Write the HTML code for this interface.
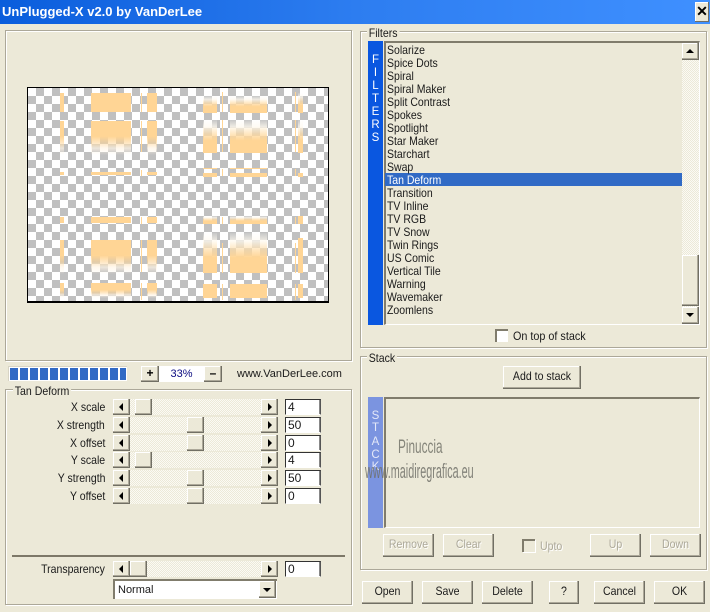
<!DOCTYPE html>
<html><head><meta charset="utf-8"><style>
html,body{margin:0;padding:0}
body{width:710px;height:612px;overflow:hidden;position:relative;background:#ece9d8;font:12px/14px "Liberation Sans",sans-serif;color:#1a1a1a}
div,span{position:absolute;box-sizing:border-box;white-space:nowrap}
.title{left:0;top:0;width:710px;height:24px;background:linear-gradient(90deg,#0a5ddc,#2d7df0 50%,#3f90ff)}
.grp{border:1px solid #aca899;box-shadow:1px 1px 0 #fff,inset 1px 1px 0 #fff}
.lab{background:#ece9d8;padding:0 2px;height:14px;transform:scaleX(.88);transform-origin:0 0}
.btn{background:#ece9d8;box-shadow:inset -1px -1px 0 #716f64,inset -2px -2px 0 #aca899,inset 1px 1px 0 #fff;text-align:center;line-height:21px}
.btn span{position:static;display:block;transform:scaleX(.88)}
.dis{color:#aca899;text-shadow:1px 1px 0 #fff}
.trk{height:16px;width:165px;left:113px;background:#f6f4ea;background-image:repeating-conic-gradient(#ece9d8 0 25%,#fbfaf4 0 50%);background-size:2px 2px}
.sb{width:17px;height:16px;background:#ece9d8;box-shadow:inset -1px -1px 0 #716f64,inset -2px -2px 0 #aca899,inset 1px 1px 0 #fff}
.th{width:17px;height:16px;background:#ece9d8;box-shadow:inset -1px -1px 0 #716f64,inset -2px -2px 0 #aca899,inset 1px 1px 0 #fff}
.al{width:0;height:0;border:4px solid transparent;border-left:0;border-right:4px solid #000;left:6px;top:4px}
.ar{width:0;height:0;border:4px solid transparent;border-right:0;border-left:4px solid #000;left:7px;top:4px}
.au{width:0;height:0;border:4px solid transparent;border-top:0;border-bottom:4px solid #000;left:4px;top:6px}
.ad{width:0;height:0;border:4px solid transparent;border-bottom:0;border-top:4px solid #000;left:4px;top:6px}
.rl{right:605px;text-align:right;transform:scaleX(.875);transform-origin:100% 0}
.inp{left:285px;width:36px;height:16px;background:#fff;border-left:1px solid #333;border-top:1px solid #333;border-right:1px solid #555;border-bottom:1px solid #fff;box-shadow:inset -1px 0 0 #888;padding-left:2px;line-height:14px;font-size:12px}
.sunk{background:#ece9d8;border-left:2px solid #807c6c;border-top:2px solid #807c6c;border-right:1px solid #fff;border-bottom:1px solid #fff}
.it{left:387px;height:13px;line-height:13px;transform:scaleX(.875);transform-origin:0 0}
.prev{left:27px;top:87px;width:302px;height:216px;border:1px solid #000;border-bottom-width:2px;overflow:hidden;background-color:#fff;background-image:repeating-conic-gradient(#c0c0c0 0 25%,#fff 0 50%);background-size:16px 16px;background-position:0 0}
.o{background:#ffd595}
.l{background:#ffd595;width:1px;left:113px}
.m{background:#ffd595;width:1px;left:194px}
.n{background:#ffd595;width:1px;left:267px}
.f{background:linear-gradient(#ffd595 0,#ffd595 45%,rgba(255,213,149,.55) 65%,rgba(255,245,230,.7) 80%,rgba(255,255,255,0) 100%)}
.u{background:linear-gradient(rgba(255,255,255,.1) 0,rgba(255,250,240,.75) 20%,rgba(255,220,165,.7) 42%,#ffd595 62%,#ffd595 100%)}
.v{color:#fff;width:15px;text-align:center;line-height:13px;font-size:11.5px}
</style></head><body>
<div class="title"></div>
<div style="left:2px;top:4px;font:bold 13px/16px 'Liberation Sans',sans-serif;color:#fff">UnPlugged-X v2.0 by VanDerLee</div>
<div class="btn" style="left:695px;top:2px;width:14px;height:20px;font:bold 14px/19px 'Liberation Sans',sans-serif;color:#000;box-shadow:inset -1px -1px 0 #716f64,inset 1px 1px 0 #fff">&#10005;</div>

<div class="grp" style="left:5px;top:30px;width:347px;height:331px"></div>
<div class="prev">
<div class="o" style="left:32px;top:5px;width:4px;height:19px"></div>
<div class="o" style="left:63px;top:5px;width:40px;height:19px"></div>
<div class="o" style="left:119px;top:5px;width:10px;height:19px"></div>
<div class="f" style="left:32px;top:33px;width:4px;height:34px"></div>
<div class="f" style="left:63px;top:33px;width:40px;height:34px"></div>
<div class="f" style="left:119px;top:33px;width:10px;height:34px"></div>
<div class="o" style="left:32px;top:84px;width:4px;height:3px"></div>
<div class="o" style="left:63px;top:84px;width:40px;height:3px"></div>
<div class="o" style="left:119px;top:84px;width:10px;height:3px"></div>
<div class="o" style="left:32px;top:129px;width:4px;height:6px"></div>
<div class="o" style="left:63px;top:129px;width:40px;height:6px"></div>
<div class="o" style="left:119px;top:129px;width:10px;height:6px"></div>
<div class="f" style="left:32px;top:152px;width:4px;height:34px"></div>
<div class="f" style="left:63px;top:152px;width:40px;height:34px"></div>
<div class="f" style="left:119px;top:152px;width:10px;height:34px"></div>
<div class="f" style="left:32px;top:195px;width:4px;height:15px"></div>
<div class="f" style="left:63px;top:195px;width:40px;height:15px"></div>
<div class="f" style="left:119px;top:195px;width:10px;height:15px"></div>
<div class="l" style="top:5px;height:19px"></div><div class="l" style="top:33px;height:31px"></div><div class="l" style="top:82px;height:6px"></div><div class="l" style="top:129px;height:7px"></div><div class="l" style="top:152px;height:32px"></div><div class="l" style="top:195px;height:17px"></div>
<div class="u" style="left:175px;top:8px;width:14px;height:17px"></div>
<div class="u" style="left:202px;top:8px;width:37px;height:17px"></div>
<div class="u" style="left:270px;top:5px;width:5px;height:20px"></div>
<div class="u" style="left:175px;top:32px;width:14px;height:33px"></div>
<div class="u" style="left:202px;top:32px;width:37px;height:33px"></div>
<div class="u" style="left:270px;top:32px;width:5px;height:33px"></div>
<div class="o" style="left:175px;top:85px;width:14px;height:4px"></div>
<div class="o" style="left:202px;top:85px;width:37px;height:4px"></div>
<div class="o" style="left:202px;top:80px;width:37px;height:1px"></div>
<div class="o" style="left:175px;top:80px;width:14px;height:1px"></div>
<div class="o" style="left:270px;top:85px;width:5px;height:4px"></div>
<div class="u" style="left:175px;top:128px;width:14px;height:8px"></div>
<div class="u" style="left:202px;top:128px;width:37px;height:8px"></div>
<div class="u" style="left:175px;top:145px;width:14px;height:40px"></div>
<div class="u" style="left:202px;top:145px;width:37px;height:40px"></div>
<div class="o" style="left:175px;top:196px;width:14px;height:14px"></div>
<div class="o" style="left:202px;top:196px;width:37px;height:14px"></div>
<div class="o" style="left:270px;top:128px;width:5px;height:8px"></div>
<div class="o" style="left:270px;top:150px;width:5px;height:35px"></div>
<div class="o" style="left:270px;top:196px;width:5px;height:14px"></div>
<div class="m" style="top:4px;height:20px"></div><div class="m" style="top:32px;height:32px"></div><div class="m" style="top:81px;height:7px"></div><div class="m" style="top:129px;height:7px"></div><div class="m" style="top:155px;height:30px"></div><div class="m" style="top:196px;height:16px"></div>
<div class="n" style="top:4px;height:20px"></div><div class="n" style="top:32px;height:32px"></div><div class="n" style="top:81px;height:7px"></div><div class="n" style="top:129px;height:7px"></div><div class="n" style="top:155px;height:30px"></div><div class="n" style="top:196px;height:16px"></div>
</div>

<div style="left:8px;top:366px;width:119px;height:15px;background:#fff;box-shadow:inset 1px 1px 0 #d8d4c4"></div>
<div style="left:10px;top:368px;width:116px;height:12px;background:repeating-linear-gradient(90deg,#316ac5 0 8px,#fff 8px 10px)"></div>
<div class="btn" style="left:141px;top:366px;width:18px;height:16px;font:bold 12px/15px 'Liberation Sans',sans-serif;color:#000">+</div>
<div style="left:159px;top:366px;width:45px;height:16px;background:#fff;color:#0a0a80;text-align:center;line-height:16px;font-size:11px">33%</div>
<div class="btn" style="left:204px;top:366px;width:18px;height:16px;font:bold 12px/15px 'Liberation Sans',sans-serif;color:#000">&#8211;</div>
<div style="left:237px;top:367px;line-height:15px;font-size:11px">www.VanDerLee.com</div>

<div class="grp" style="left:5px;top:389px;width:347px;height:216px"></div>
<div class="lab" style="left:13px;top:384px">Tan Deform</div>

<div class="rl" style="top:400px">X scale</div>
<div class="trk" style="top:399px"></div><div class="sb" style="left:113px;top:399px"><span class="al"></span></div><div class="th" style="left:135px;top:399px"></div><div class="sb" style="left:261px;top:399px"><span class="ar"></span></div><div class="inp" style="top:399px">4</div>
<div class="rl" style="top:418px">X strength</div>
<div class="trk" style="top:417px"></div><div class="sb" style="left:113px;top:417px"><span class="al"></span></div><div class="th" style="left:187px;top:417px"></div><div class="sb" style="left:261px;top:417px"><span class="ar"></span></div><div class="inp" style="top:417px">50</div>
<div class="rl" style="top:436px">X offset</div>
<div class="trk" style="top:435px"></div><div class="sb" style="left:113px;top:435px"><span class="al"></span></div><div class="th" style="left:187px;top:435px"></div><div class="sb" style="left:261px;top:435px"><span class="ar"></span></div><div class="inp" style="top:435px">0</div>
<div class="rl" style="top:453px">Y scale</div>
<div class="trk" style="top:452px"></div><div class="sb" style="left:113px;top:452px"><span class="al"></span></div><div class="th" style="left:135px;top:452px"></div><div class="sb" style="left:261px;top:452px"><span class="ar"></span></div><div class="inp" style="top:452px">4</div>
<div class="rl" style="top:471px">Y strength</div>
<div class="trk" style="top:470px"></div><div class="sb" style="left:113px;top:470px"><span class="al"></span></div><div class="th" style="left:187px;top:470px"></div><div class="sb" style="left:261px;top:470px"><span class="ar"></span></div><div class="inp" style="top:470px">50</div>
<div class="rl" style="top:489px">Y offset</div>
<div class="trk" style="top:488px"></div><div class="sb" style="left:113px;top:488px"><span class="al"></span></div><div class="th" style="left:187px;top:488px"></div><div class="sb" style="left:261px;top:488px"><span class="ar"></span></div><div class="inp" style="top:488px">0</div>

<div style="left:12px;top:555px;width:333px;height:2px;background:#7d7868"></div>
<div class="rl" style="top:562px">Transparency</div>
<div class="trk" style="top:561px"></div><div class="sb" style="left:113px;top:561px"><span class="al"></span></div><div class="th" style="left:130px;top:561px"></div><div class="sb" style="left:261px;top:561px"><span class="ar"></span></div><div class="inp" style="top:561px">0</div>
<div style="left:113px;top:579px;width:164px;height:20px;background:#fff;border-left:2px solid #807c6c;border-top:2px solid #807c6c;padding-left:3px;line-height:19px;font-size:11px">Normal</div>
<div class="sb" style="left:259px;top:581px;width:17px;height:17px"><span class="ad" style="left:4px;top:7px"></span></div>

<div class="grp" style="left:360px;top:31px;width:347px;height:317px"></div>
<div class="lab" style="left:367px;top:26px">Filters</div>
<div style="left:368px;top:41px;width:15px;height:284px;background:#0a57e0"></div>
<div class="v" style="left:368px;top:54px">F</div><div class="v" style="left:368px;top:67px">I</div><div class="v" style="left:368px;top:80px">L</div><div class="v" style="left:368px;top:93px">T</div><div class="v" style="left:368px;top:106px">E</div><div class="v" style="left:368px;top:119px">R</div><div class="v" style="left:368px;top:132px">S</div>
<div class="sunk" style="left:384px;top:41px;width:316px;height:284px"></div>
<div style="left:385px;top:173px;width:297px;height:13px;background:#316ac5"></div>
<div class="it" style="top:44px">Solarize</div>
<div class="it" style="top:57px">Spice Dots</div>
<div class="it" style="top:70px">Spiral</div>
<div class="it" style="top:83px">Spiral Maker</div>
<div class="it" style="top:96px">Split Contrast</div>
<div class="it" style="top:109px">Spokes</div>
<div class="it" style="top:122px">Spotlight</div>
<div class="it" style="top:135px">Star Maker</div>
<div class="it" style="top:148px">Starchart</div>
<div class="it" style="top:161px">Swap</div>
<div class="it" style="top:174px;color:#fff">Tan Deform</div>
<div class="it" style="top:187px">Transition</div>
<div class="it" style="top:200px">TV Inline</div>
<div class="it" style="top:213px">TV RGB</div>
<div class="it" style="top:226px">TV Snow</div>
<div class="it" style="top:239px">Twin Rings</div>
<div class="it" style="top:252px">US Comic</div>
<div class="it" style="top:265px">Vertical Tile</div>
<div class="it" style="top:278px">Warning</div>
<div class="it" style="top:291px">Wavemaker</div>
<div class="it" style="top:304px">Zoomlens</div>
<div class="trk" style="left:682px;top:43px;width:17px;height:280px"></div>
<div class="sb" style="left:682px;top:43px;height:17px"><span class="au"></span></div>
<div class="th" style="left:682px;top:255px;height:51px"></div>
<div class="sb" style="left:682px;top:307px;height:17px"><span class="ad"></span></div>
<div style="left:495px;top:329px;width:13px;height:13px;background:#fff;border-left:2px solid #807c6c;border-top:2px solid #807c6c"></div>
<div class="it" style="left:513px;top:329px;line-height:14px;transform:scaleX(.9)">On top of stack</div>

<div class="grp" style="left:360px;top:356px;width:347px;height:214px"></div>
<div class="lab" style="left:367px;top:351px">Stack</div>
<div class="btn" style="left:503px;top:366px;width:78px;height:23px"><span>Add to stack</span></div>
<div style="left:368px;top:397px;width:15px;height:131px;background:#7b94e0"></div>
<div class="v" style="left:368px;top:410px;color:#e4e8f8">S</div><div class="v" style="left:368px;top:422px;color:#e4e8f8">T</div><div class="v" style="left:368px;top:436px;color:#e4e8f8">A</div><div class="v" style="left:368px;top:449px;color:#e4e8f8">C</div><div class="v" style="left:368px;top:461px;color:#e4e8f8">K</div>
<div class="sunk" style="left:384px;top:397px;width:316px;height:131px"></div>
<div style="left:398px;top:438px;font-size:19px;line-height:20px;color:#85857a;transform:scaleX(.62);transform-origin:0 0">Pinuccia</div>
<div style="left:365px;top:462px;font-size:20px;line-height:20px;color:#6f6f68;opacity:.85;transform:scaleX(.54);transform-origin:0 0">www.maidiregrafica.eu</div>

<div class="btn dis" style="left:383px;top:534px;width:51px;height:23px"><span>Remove</span></div>
<div class="btn dis" style="left:443px;top:534px;width:51px;height:23px"><span>Clear</span></div>
<div style="left:522px;top:539px;width:13px;height:13px;background:#ece9d8;border-left:2px solid #807c6c;border-top:2px solid #807c6c;box-shadow:1px 1px 0 #fff"></div>
<div class="dis" style="left:540px;top:539px;transform:scaleX(.88);transform-origin:0 0">Upto</div>
<div class="btn dis" style="left:590px;top:534px;width:51px;height:23px"><span>Up</span></div>
<div class="btn dis" style="left:650px;top:534px;width:51px;height:23px"><span>Down</span></div>

<div class="btn" style="left:362px;top:581px;width:51px;height:23px"><span>Open</span></div>
<div class="btn" style="left:422px;top:581px;width:51px;height:23px"><span>Save</span></div>
<div class="btn" style="left:482px;top:581px;width:51px;height:23px"><span>Delete</span></div>
<div class="btn" style="left:549px;top:581px;width:30px;height:23px"><span>?</span></div>
<div class="btn" style="left:594px;top:581px;width:51px;height:23px"><span>Cancel</span></div>
<div class="btn" style="left:654px;top:581px;width:51px;height:23px"><span>OK</span></div>
</body></html>
